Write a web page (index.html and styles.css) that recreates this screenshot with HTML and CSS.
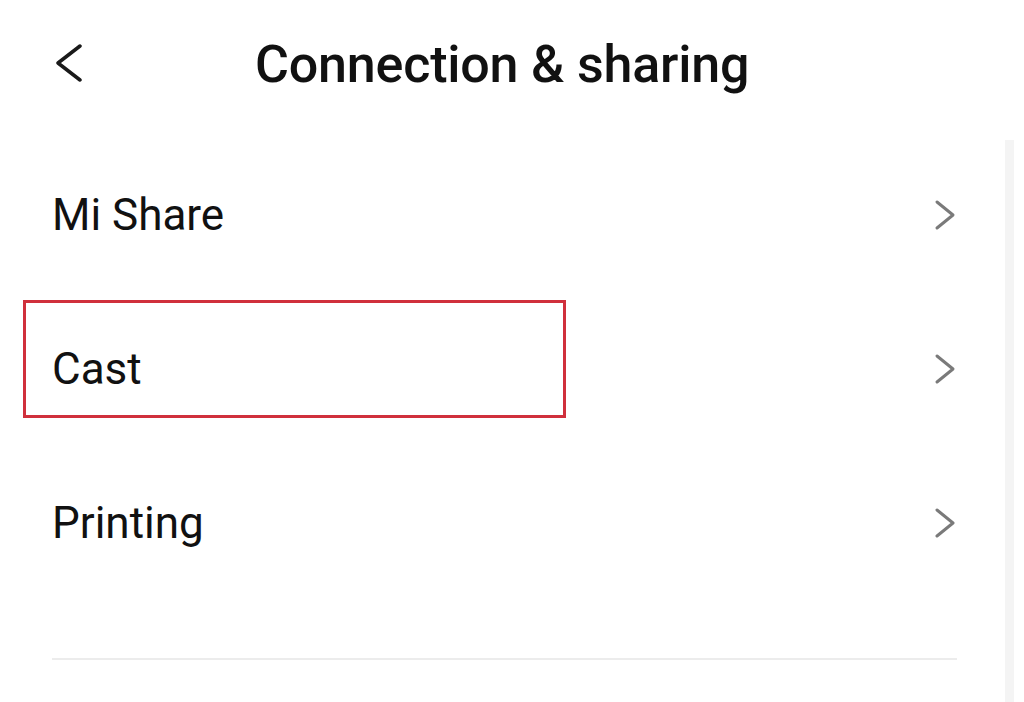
FILE: index.html
```html
<!DOCTYPE html>
<html>
<head>
    <title>Connection &amp; sharing</title>
    <link rel="stylesheet" href="styles.css">
</head>
<body>
    <div class="screen">
        <div class="header">
            <svg class="back" width="28" height="38" viewBox="0 0 28 38">
                <polyline points="25,2 3,19 25,36" fill="none" stroke="#1a1a1a" stroke-width="3.5" stroke-linecap="round" stroke-linejoin="round" />
            </svg>
            <h1 class="title">Connection &amp; sharing</h1>
        </div>

        <div class="list">
            <div class="row">
                <span class="label">Mi Share</span>
                <svg class="arrow" width="24" height="32" viewBox="0 0 24 32">
                    <polyline points="4,3 20,16 4,29" fill="none" stroke="#7a7a7a" stroke-width="3" stroke-linecap="round" stroke-linejoin="round" />
                </svg>
            </div>
            <div class="row">
                <span class="label">Cast</span>
                <svg class="arrow" width="24" height="32" viewBox="0 0 24 32">
                    <polyline points="4,3 20,16 4,29" fill="none" stroke="#7a7a7a" stroke-width="3" stroke-linecap="round" stroke-linejoin="round" />
                </svg>
                <!-- highlight box drawn over the row -->
                <div class="mark"></div>
            </div>
            <div class="row">
                <span class="label">Printing</span>
                <svg class="arrow" width="24" height="32" viewBox="0 0 24 32">
                    <polyline points="4,3 20,16 4,29" fill="none" stroke="#7a7a7a" stroke-width="3" stroke-linecap="round" stroke-linejoin="round" />
                </svg>
            </div>
            <div class="divider"></div>
        </div>

        <div class="scrollbar"></div>
    </div>
</body>
</html>
```

FILE: styles.css
```css
body {
    font-family: Roboto, "Noto Sans", sans-serif;
    background-color: #fff;
    margin: 0;
    color: #111;
}

.screen {
    position: relative;
    height: 702px;
    overflow: hidden;
}

.header {
    display: flex;
    align-items: center;
    height: 128px;
    padding-left: 55px;
}

.back {
    display: block;
    margin-top: -2px;
}

.title {
    margin: 0 0 0 172px;
    font-size: 52px;
    font-weight: 500;
    color: #111;
    letter-spacing: -0.2px;
}

.list {
    padding: 10px 67px 0 52px;
}

.row {
    position: relative;
    display: flex;
    align-items: center;
    justify-content: space-between;
    height: 154px;
}

.label {
    font-size: 44px;
    font-weight: 400;
}

.arrow {
    display: block;
}

.mark {
    position: absolute;
    left: -29px;
    top: 8px;
    width: 537px;
    height: 112px;
    border: 3px solid #d0303c;
}

.divider {
    margin-top: 58px;
    height: 2px;
    background-color: #ececec;
}

.scrollbar {
    position: absolute;
    top: 140px;
    bottom: 0;
    left: 1005px;
    width: 9px;
    background-color: #f4f4f4;
}
```
